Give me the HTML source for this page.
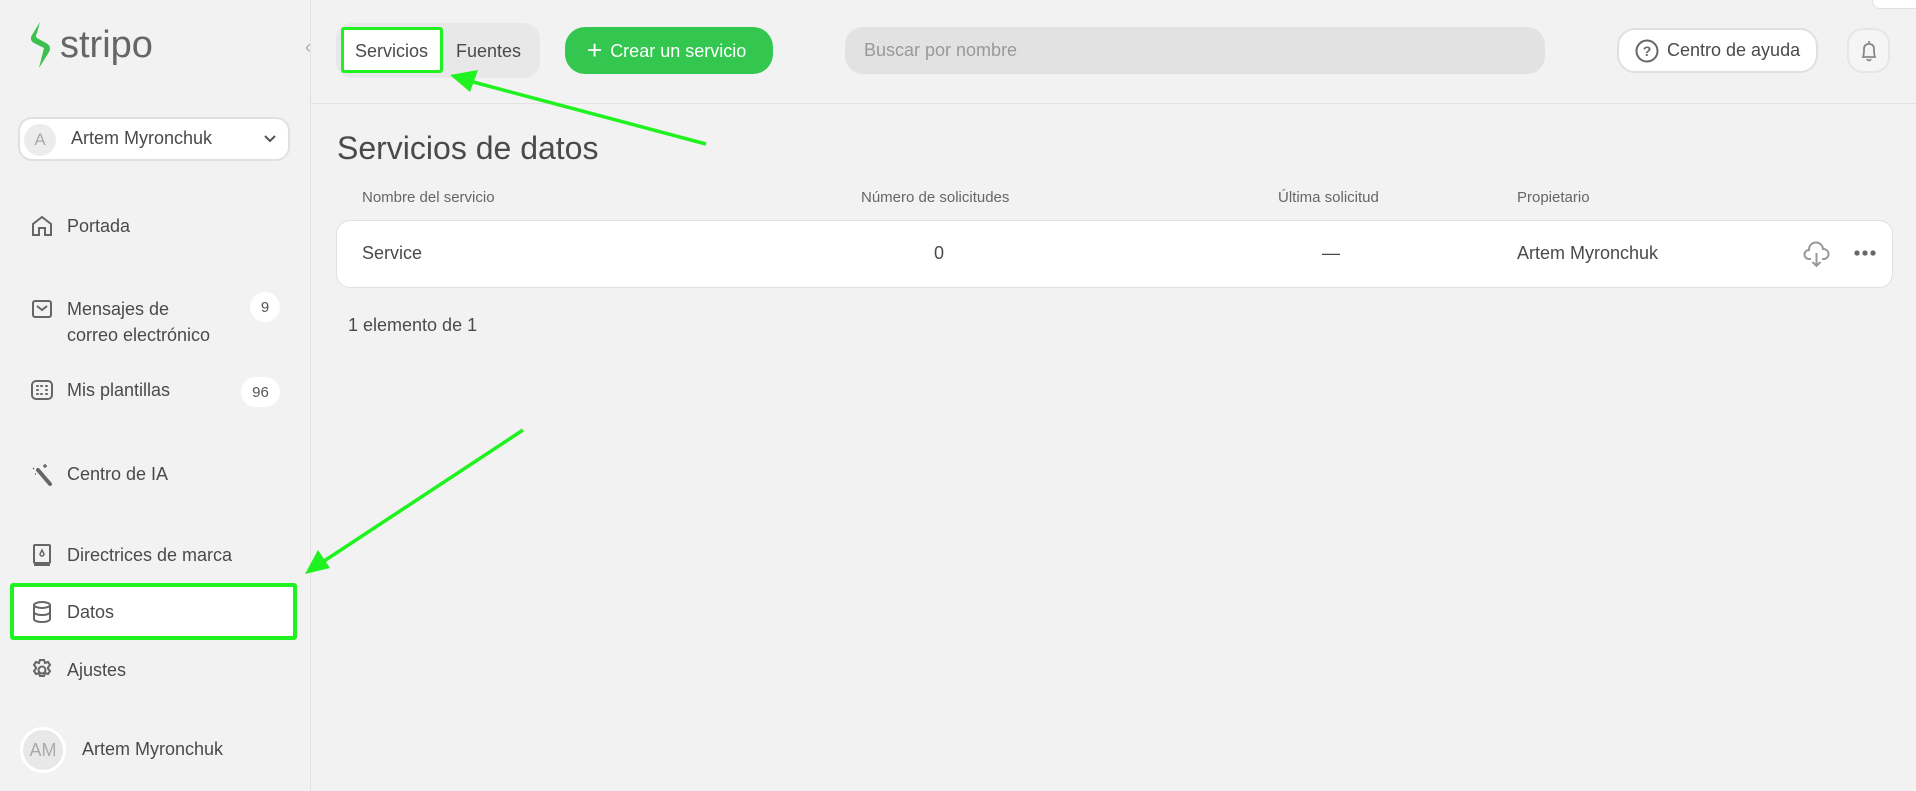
<!DOCTYPE html>
<html><head><meta charset="utf-8">
<style>
*{box-sizing:border-box;margin:0;padding:0}
body{width:1916px;height:791px;background:#f2f2f2;font-family:"Liberation Sans",sans-serif;color:#4a4a4a;position:relative;overflow:hidden}
.a{position:absolute}
.nav{position:absolute;left:30px;font-size:18px;color:#4a4a4a;display:flex;align-items:center}
.nav svg{width:24px;height:24px;margin-right:13px;flex:none}
.badge{position:absolute;background:#fff;border-radius:16px;font-size:15px;display:flex;align-items:center;justify-content:center;color:#555}
.hd{position:absolute;top:189px;font-size:15px;color:#666}
.rw{position:absolute;top:243px;font-size:18px;color:#4a4a4a}
</style></head><body>
<!-- sidebar -->
<div class="a" style="left:310px;top:0;width:1px;height:791px;background:#e2e2e2"></div>
<svg class="a" style="left:29px;top:22px" width="24" height="46" viewBox="0 0 24 46"><path d="M11 0 L3 13 Q0 18 5 21 L15 26 L10 46 L20 30 Q23 24 17 21 L8 16 Q6 14 8 11 Z" fill="#3cc04f"/></svg>
<div class="a" style="left:60px;top:24px;font-size:38px;color:#666">stripo</div>
<div class="a" style="left:305px;top:37px;font-size:18px;color:#aaa">‹</div>

<div class="a" style="left:18px;top:117px;width:272px;height:44px;background:#fff;border:2px solid #e0e0e0;border-radius:14px"></div>
<div class="a" style="left:24px;top:124px;width:32px;height:32px;background:#ececec;border-radius:16px;color:#aaa;font-size:17px;text-align:center;line-height:32px">A</div>
<div class="a" style="left:71px;top:128px;font-size:18px">Artem Myronchuk</div>
<svg class="a" style="left:263px;top:134px" width="14" height="10" viewBox="0 0 14 10"><path d="M2 2 L7 7 L12 2" stroke="#555" stroke-width="2" fill="none"/></svg>

<div class="nav" style="top:214px"><svg viewBox="0 0 24 24" fill="none" stroke="#666" stroke-width="2"><path d="M3 21 V10 L12 3 L21 10 V21 H15 V14 H9 V21 Z"/></svg>Portada</div>
<div class="nav" style="top:296px;line-height:26px;align-items:flex-start"><svg viewBox="0 0 24 24" fill="none" stroke="#666" stroke-width="2" style="margin-top:1px"><rect x="3" y="4" width="18" height="16" rx="2"/><path d="M7 9 L12 13 L17 9"/></svg>Mensajes de<br>correo electrónico</div>
<div class="badge" style="left:250px;top:292px;width:30px;height:30px">9</div>
<div class="nav" style="top:378px"><svg viewBox="0 0 24 24" fill="none" stroke="#666" stroke-width="2"><rect x="2" y="3" width="20" height="18" rx="4"/><path d="M7 8h1M11 8h1M16 8h1M7 12h1M16 12h1M7 16h1M11 16h1M16 16h1" stroke-linecap="round"/></svg>Mis plantillas</div>
<div class="badge" style="left:241px;top:377px;width:39px;height:30px">96</div>
<div class="nav" style="top:462px"><svg viewBox="0 0 24 24" fill="none" stroke="#666" stroke-width="2"><path d="M8 8 L20 22" stroke-width="4" stroke-linecap="round"/><path d="M15 2v4M13 4h4M3 6l1 1M5 12l1 0" stroke-width="1.5"/></svg>Centro de IA</div>
<div class="nav" style="top:543px"><svg viewBox="0 0 24 24" fill="none" stroke="#666" stroke-width="2"><rect x="4" y="2" width="16" height="18" rx="1"/><path d="M4 22h16"/><path d="M12 7 L14 11 A2 2 0 1 1 10 11 Z" stroke-width="1.5"/></svg>Directrices de marca</div>
<div class="a" style="left:10px;top:583px;width:287px;height:57px;background:#fff;border:4px solid #1ff21f;border-radius:3px"></div>
<div class="nav" style="top:600px"><svg viewBox="0 0 24 24" fill="none" stroke="#666" stroke-width="2"><ellipse cx="12" cy="5" rx="8" ry="3"/><path d="M4 5v14c0 1.7 3.6 3 8 3s8-1.3 8-3V5M4 12c0 1.7 3.6 3 8 3s8-1.3 8-3"/></svg>Datos</div>
<div class="nav" style="top:658px"><svg viewBox="0 0 24 24" fill="none" stroke="#666" stroke-width="2"><circle cx="12" cy="12" r="3.5"/><path d="M10 2h4l1 3 3-1 2 3-2 2.5 0 1 2 2.5-2 3-3-1-1 3h-4l-1-3-3 1-2-3 2-2.5v-1L4 7l2-3 3 1z"/></svg>Ajustes</div>
<div class="a" style="left:20px;top:727px;width:46px;height:46px;background:#e8e8e8;border:3px solid #fff;border-radius:23px;color:#aaa;font-size:18px;text-align:center;line-height:40px">AM</div>
<div class="a" style="left:82px;top:739px;font-size:18px">Artem Myronchuk</div>

<!-- header -->
<div class="a" style="left:311px;top:103px;width:1605px;height:1px;background:#e2e2e2"></div>
<div class="a" style="left:336px;top:23px;width:204px;height:55px;background:#e8e8e8;border-radius:16px"></div>
<div class="a" style="left:341px;top:27px;width:102px;height:46px;background:#fff;border:3px solid #1ff21f;border-radius:3px"></div>
<div class="a" style="left:355px;top:41px;font-size:18px">Servicios</div>
<div class="a" style="left:456px;top:41px;font-size:18px">Fuentes</div>
<div class="a" style="left:565px;top:27px;width:208px;height:47px;background:#34c74f;border-radius:20px;color:#fff;font-size:18px;line-height:47px;padding-left:22px"><span style="font-size:26px;vertical-align:-2px;margin-right:8px">+</span>Crear un servicio</div>
<div class="a" style="left:845px;top:27px;width:700px;height:47px;background:#e2e2e2;border-radius:18px;color:#999;font-size:18px;line-height:47px;padding-left:19px">Buscar por nombre</div>
<div class="a" style="left:1617px;top:28px;width:201px;height:45px;background:#fff;border:2px solid #e0e0e0;border-radius:18px;font-size:18px;line-height:41px;padding-left:16px;display:flex;align-items:center"><svg width="24" height="24" viewBox="0 0 24 24" style="margin-right:8px"><circle cx="12" cy="12" r="10.5" fill="none" stroke="#666" stroke-width="2"/><text x="12" y="17" font-size="14" text-anchor="middle" fill="#666" font-family="Liberation Sans" font-weight="bold">?</text></svg>Centro de ayuda</div>
<div class="a" style="left:1847px;top:28px;width:43px;height:45px;background:#f5f5f5;border:2px solid #e6e6e6;border-radius:16px"></div>
<svg class="a" style="left:1859px;top:39px" width="20" height="24" viewBox="0 0 20 24" fill="none" stroke="#888" stroke-width="1.8"><path d="M10 2v2M4 18 Q5 16 5 10 Q5 5 10 5 Q15 5 15 10 Q15 16 16 18 Z M8 20 Q10 23 12 20"/></svg>
<div class="a" style="left:1872px;top:-10px;width:60px;height:19px;background:#fff;border:1px solid #e0e0e0;border-radius:8px"></div>

<!-- content -->
<div class="a" style="left:337px;top:130px;font-size:32px;color:#4a4a4a">Servicios de datos</div>
<div class="hd" style="left:362px">Nombre del servicio</div>
<div class="hd" style="left:861px">Número de solicitudes</div>
<div class="hd" style="left:1278px">Última solicitud</div>
<div class="hd" style="left:1517px">Propietario</div>
<div class="a" style="left:336px;top:220px;width:1557px;height:68px;background:#fff;border:1px solid #e0e0e0;border-radius:14px"></div>
<div class="rw" style="left:362px">Service</div>
<div class="rw" style="left:934px">0</div>
<div class="rw" style="left:1322px">—</div>
<div class="rw" style="left:1517px">Artem Myronchuk</div>
<svg class="a" style="left:1803px;top:241px" width="27" height="27" viewBox="0 0 27 27" fill="none" stroke="#999" stroke-width="2"><path d="M8 18 H6 A4.5 4.5 0 0 1 6 9 A7 7 0 0 1 20 8 A5 5 0 0 1 21 18 H19"/><path d="M13.5 12 V25 M9.5 21 L13.5 25 L17.5 21"/></svg>
<svg class="a" style="left:1853px;top:249px" width="24" height="8" viewBox="0 0 24 8" fill="#666"><circle cx="4" cy="4" r="2.6"/><circle cx="12" cy="4" r="2.6"/><circle cx="20" cy="4" r="2.6"/></svg>
<div class="a" style="left:348px;top:315px;font-size:18px">1 elemento de 1</div>

<!-- arrows -->
<svg class="a" style="left:0;top:0" width="1916" height="791" viewBox="0 0 1916 791">
<path d="M706 144 L462 79" stroke="#1ff21f" stroke-width="3.5"/>
<path d="M450 75 L478 70 L470 92 Z" fill="#1ff21f"/>
<path d="M523 430 L315 567" stroke="#1ff21f" stroke-width="3.5"/>
<path d="M305 574 L318 550 L330 568 Z" fill="#1ff21f"/>
</svg>
</body></html>
